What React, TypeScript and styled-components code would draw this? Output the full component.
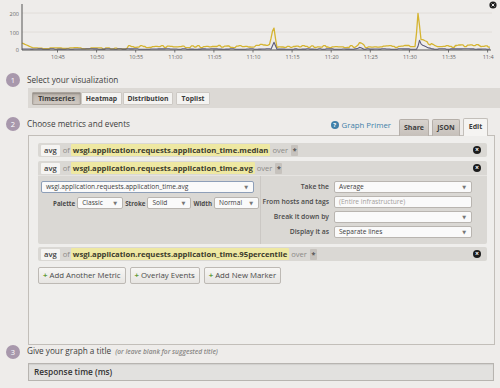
import React from 'react';
import styled, { createGlobalStyle } from 'styled-components';

const GlobalStyle = createGlobalStyle`
  html, body {
    margin: 0;
    padding: 0;
    background: #eeecea;
  }
  * {
    box-sizing: border-box;
  }
`;

const colors = {
  page: '#eeecea',
  text: '#444',
  muted: '#8c8a87',
  badge: '#a898ac',
  bar: '#dcd9d5',
  row: '#dad8d4',
  border: '#c2beb9',
  highlight: '#eee8a2',
  link: '#3f7fa8',
  plus: '#5f9a35',
  yellow: '#d5b431',
  line: '#5d5c7c',
};

const Page = styled.div`
  width: 500px;
  height: 388px;
  overflow: hidden;
  background: ${colors.page};
  font-family: 'Open Sans', 'DejaVu Sans', sans-serif;
  color: ${colors.text};
`;

const ChartSvg = styled.svg`
  display: block;
  width: 500px;
  height: 68px;
`;

const StepHeader = styled.div<{ $height: number }>`
  display: flex;
  align-items: flex-end;
  height: ${p => p.$height}px;
  padding-bottom: 1px;
  padding-right: 12px;
`;

const Badge = styled.span<{ $lift?: number }>`
  width: 14px;
  height: 14px;
  margin-left: 6px;
  margin-bottom: ${p => p.$lift || 0}px;
  border-radius: 50%;
  background: ${colors.badge};
  color: #fff;
  font-size: 7.5px;
  line-height: 14px;
  text-align: center;
  flex-shrink: 0;
`;

const StepTitle = styled.span<{ $lift?: number }>`
  margin-left: 7px;
  margin-bottom: ${p => p.$lift || 0}px;
  font-size: 8.2px;
  line-height: 14px;
  color: #3d3d3d;
  white-space: nowrap;
`;

const Hint = styled.em`
  font-size: 6.6px;
  color: #8a8886;
  font-weight: 600;
  margin-left: 2px;
`;

const VizBar = styled.div`
  display: flex;
  height: 20px;
  margin-left: 28px;
  padding: 4px 0 0 4px;
  background: ${colors.bar};
`;

const VizButton = styled.span<{ $active?: boolean; $width: number; $space?: number }>`
  width: ${p => p.$width}px;
  height: 13px;
  margin-left: ${p => p.$space || 0}px;
  border: 1px solid ${p => (p.$active ? '#aaa39c' : '#cdc9c4')};
  border-radius: 1px;
  background: ${p => (p.$active ? 'linear-gradient(#beb6ae, #d0c9c2)' : '#f4f3f1')};
  box-shadow: ${p => (p.$active ? 'inset 0 1px 2px rgba(0,0,0,0.25)' : 'none')};
  font-size: 6.8px;
  font-weight: 700;
  line-height: 11px;
  text-align: center;
  color: #3a3a3a;
`;

const Spacer = styled.div`
  flex: 1;
`;

const PrimerLink = styled.span`
  display: flex;
  align-items: center;
  gap: 3px;
  margin-bottom: 4px;
  margin-right: 8px;
  font-size: 7.8px;
  color: ${colors.link};
`;

const HelpDot = styled.span`
  width: 8px;
  height: 8px;
  border-radius: 50%;
  background: ${colors.link};
  color: #fff;
  font-size: 6px;
  font-weight: 700;
  line-height: 8px;
  text-align: center;
`;

const Tabs = styled.div`
  display: flex;
  align-items: flex-end;
  gap: 3px;
  margin-bottom: -2px;
  position: relative;
  z-index: 1;
`;

const Tab = styled.span<{ $active?: boolean; $width: number }>`
  width: ${p => p.$width}px;
  height: ${p => (p.$active ? 18 : 17)}px;
  border: 1px solid ${p => (p.$active ? '#c3bfba' : '#b5afa9')};
  border-bottom: none;
  border-radius: 2px 2px 0 0;
  background: ${p => (p.$active ? '#f5f4f2' : 'linear-gradient(#d8d3ce, #c6c0ba)')};
  font-size: 7px;
  font-weight: 700;
  line-height: 16px;
  text-align: center;
  color: #3d3d3d;
`;

const Panel = styled.div`
  height: 210px;
  margin: 0 5px 0 28px;
  padding: 7px 7px 0 9px;
  border: 1px solid ${colors.border};
  background: #efeeec;
`;

const MetricBlock = styled.div<{ $gap: number }>`
  margin-top: ${p => p.$gap}px;
  border-radius: 2px;
  background: ${colors.row};
`;

const MetricHead = styled.div`
  display: flex;
  align-items: center;
  height: 14px;
  padding: 0 6px 0 3px;
  font-size: 7.7px;
  white-space: nowrap;
`;

const Agg = styled.span`
  height: 11px;
  padding: 0 3px;
  border-radius: 1px;
  background: #f5f4f2;
  font-size: 7.6px;
  line-height: 11px;
  font-weight: 600;
  color: #404040;
`;

const Word = styled.span<{ $before: number; $after: number }>`
  margin: 0 ${p => p.$after}px 0 ${p => p.$before}px;
  font-size: 7.6px;
  color: ${colors.muted};
`;

const MetricName = styled.span`
  height: 12px;
  padding: 0 2px;
  border-radius: 1px;
  background: ${colors.highlight};
  line-height: 12px;
  font-weight: 700;
  color: #3c3b2c;
`;

const Scope = styled.span`
  width: 7px;
  height: 11px;
  border-radius: 1px;
  background: #c6c2bd;
  font-size: 7px;
  font-weight: 700;
  line-height: 12px;
  text-align: center;
  color: #555;
`;

const CloseDot = styled.span`
  width: 8px;
  height: 8px;
  margin-left: auto;
  border-radius: 50%;
  background: #1c1c1c;
  color: #fff;
  font-size: 7px;
  font-weight: 700;
  line-height: 7.5px;
  text-align: center;
`;

const Editor = styled.div`
  display: flex;
  height: 69px;
  border-top: 1px solid #e6e4e1;
`;

const EditorLeft = styled.div`
  width: 223px;
  padding: 5px 0 0 3px;
  border-right: 1px solid #cbc8c4;
`;

const EditorRight = styled.div`
  display: grid;
  grid-template-columns: 68px 138px;
  grid-auto-rows: 12px;
  column-gap: 5px;
  row-gap: 3px;
  align-content: start;
  padding-top: 5px;
`;

const Select = styled.div<{ $width: number; $focus?: boolean; $placeholder?: boolean }>`
  position: relative;
  width: ${p => p.$width}px;
  height: 12px;
  padding-left: 4px;
  border: 1px solid ${p => (p.$focus ? '#8e9fb8' : '#b9b5b0')};
  border-radius: 2px;
  background: #fafafa;
  font-size: 6.6px;
  line-height: 10px;
  color: ${p => (p.$placeholder ? '#a3a09c' : '#3d3d3d')};
  white-space: nowrap;
  overflow: hidden;
  flex-shrink: 0;
`;

const Caret = styled.span`
  position: absolute;
  right: 5px;
  top: 0;
  font-size: 5px;
  color: #777;
`;

const OptionRow = styled.div`
  display: flex;
  align-items: center;
  gap: 2px;
  margin-top: 4px;
  padding-left: 12px;
`;

const FieldLabel = styled.span`
  font-size: 6.2px;
  font-weight: 700;
  color: #4a4a4a;
  white-space: nowrap;
`;

const RightLabel = styled(FieldLabel)`
  text-align: right;
  line-height: 12px;
  font-weight: 600;
  font-size: 6.8px;
`;

const Actions = styled.div`
  display: flex;
  gap: 4px;
  margin-top: 6px;
`;

const ActionButton = styled.span`
  height: 17px;
  padding: 0 4px;
  border: 1px solid #bdb9b4;
  border-radius: 2px;
  background: linear-gradient(#f7f6f4, #e7e5e2);
  font-size: 7.8px;
  line-height: 15px;
  color: #4a4a4a;
  white-space: nowrap;
`;

const Plus = styled.span`
  margin-right: 2px;
  color: ${colors.plus};
  font-weight: 700;
`;

const TitleInput = styled.div`
  height: 18px;
  margin: 2px 6px 0 28px;
  padding-left: 5px;
  border: 1px solid #b7b4b0;
  background: #e2e1df;
  box-shadow: inset 0 1px 1px rgba(0, 0, 0, 0.08);
  font-size: 8.3px;
  font-weight: 600;
  line-height: 16px;
  color: #333;
`;

const TICKS = ['10:45', '10:50', '10:55', '11:00', '11:05', '11:10', '11:15', '11:20', '11:25', '11:30', '11:35', '11:4'];

const noise = (i: number, seed: number) => {
  const v = Math.sin(i * 12.9898 + seed * 78.233) * 43758.5453;
  return v - Math.floor(v) - 0.5;
};

const peak = (x: number, cx: number, w: number, h: number) => Math.max(0, 1 - Math.abs(x - cx) / w) * h;

const buildSeries = () => {
  const yellow: string[] = [];
  const gray: string[] = [];
  for (let x = 22; x <= 490; x += 1.5) {
    let y = 46.6 + noise(Math.round(x / 3), 1) * 2.2;
    let g = 49 + noise(Math.round(x / 4), 2) * 0.7;
    if (x < 34) y = 43 + (x - 22) * 0.45;
    else if (x < 128) y = 48.4 + noise(Math.round(x / 4), 3) * 1.4;
    if (x > 255 && x < 272) y -= 1.5;
    y -= peak(x, 273.5, 3.5, 21);
    g -= peak(x, 274, 3, 7);
    y -= peak(x, 360, 5, 4);
    g -= peak(x, 360, 4, 2);
    y -= peak(x, 418, 2.5, 33);
    if (x > 419 && x < 436) y -= (436 - x) * 0.45;
    g -= peak(x, 419, 2.5, 5);
    if (x > 419 && x < 432) g -= (432 - x) * 0.4;
    if (x > 455 && x < 480) y -= 1;
    yellow.push(`${x},${Math.min(y, 49.5).toFixed(1)}`);
    gray.push(`${x},${Math.min(g, 49.6).toFixed(1)}`);
  }
  return { yellow: yellow.join(' '), gray: gray.join(' ') };
};

const series = buildSeries();

const Chart = () => (
  <ChartSvg viewBox="0 0 500 68">
    <line x1="22" y1="13" x2="492" y2="13" stroke="#dddad6" strokeWidth="0.8" />
    <line x1="22" y1="32" x2="492" y2="32" stroke="#dddad6" strokeWidth="0.8" />
    <g fontFamily="'Open Sans', sans-serif" fontSize="5.5" fill="#666" textAnchor="end">
      <text x="19" y="15.5">200</text>
      <text x="19" y="34.5">100</text>
      <text x="19" y="52">0</text>
    </g>
    <polyline points={series.yellow} fill="none" stroke={colors.yellow} strokeWidth="1.3" strokeLinejoin="round" />
    <polyline points={series.gray} fill="none" stroke={colors.line} strokeWidth="1.1" strokeLinejoin="round" />
    <line x1="22" y1="4" x2="22" y2="50" stroke="#555" strokeWidth="1" />
    <line x1="22" y1="50" x2="491" y2="50" stroke="#555" strokeWidth="1" />
    <g fontFamily="'Open Sans', sans-serif" fontSize="5.5" fill="#666" textAnchor="middle">
      {TICKS.map((t, i) => {
        const x = 57.5 + i * 39.1;
        return (
          <g key={t}>
            <line x1={x} y1="50" x2={x} y2="52.5" stroke="#555" strokeWidth="0.8" />
            <text x={x + 0.5} y="59">{t}</text>
          </g>
        );
      })}
    </g>
    <circle cx="493" cy="5" r="3.6" fill="#1f1f1f" />
    <path d="M491.6 3.6 L494.4 6.4 M494.4 3.6 L491.6 6.4" stroke="#fff" strokeWidth="0.9" />
  </ChartSvg>
);

const MetricLine = ({ name }: { name: string }) => (
  <MetricHead>
    <Agg>avg</Agg>
    <Word $before={3} $after={1}>of</Word>
    <MetricName>{name}</MetricName>
    <Word $before={2} $after={3}>over</Word>
    <Scope>*</Scope>
    <CloseDot>×</CloseDot>
  </MetricHead>
);

const Dropdown = ({ width, value, focus, placeholder, caret = true }: { width: number; value: string; focus?: boolean; placeholder?: boolean; caret?: boolean }) => (
  <Select $width={width} $focus={focus} $placeholder={placeholder}>
    {value}
    {caret && <Caret>▼</Caret>}
  </Select>
);

const App = () => (
  <Page>
    <GlobalStyle />
    <Chart />

    <StepHeader $height={20}>
      <Badge>1</Badge>
      <StepTitle>Select your visualization</StepTitle>
    </StepHeader>
    <VizBar>
      <VizButton $active $width={49}>Timeseries</VizButton>
      <VizButton $width={41}>Heatmap</VizButton>
      <VizButton $width={50} $space={1}>Distribution</VizButton>
      <VizButton $width={34} $space={3}>Toplist</VizButton>
    </VizBar>

    <StepHeader $height={27}>
      <Badge $lift={3}>2</Badge>
      <StepTitle $lift={3}>Choose metrics and events</StepTitle>
      <Spacer />
      <PrimerLink>
        <HelpDot>?</HelpDot>
        Graph Primer
      </PrimerLink>
      <Tabs>
        <Tab $width={30}>Share</Tab>
        <Tab $width={28}>JSON</Tab>
        <Tab $width={25} $active>Edit</Tab>
      </Tabs>
    </StepHeader>

    <Panel>
      <MetricBlock $gap={0}>
        <MetricLine name="wsgi.application.requests.application_time.median" />
      </MetricBlock>
      <MetricBlock $gap={4}>
        <MetricLine name="wsgi.application.requests.application_time.avg" />
        <Editor>
          <EditorLeft>
            <Dropdown width={213} value="wsgi.application.requests.application_time.avg" focus />
            <OptionRow>
              <FieldLabel>Palette</FieldLabel>
              <Dropdown width={46} value="Classic" />
              <FieldLabel>Stroke</FieldLabel>
              <Dropdown width={44} value="Solid" />
              <FieldLabel>Width</FieldLabel>
              <Dropdown width={45} value="Normal" />
            </OptionRow>
          </EditorLeft>
          <EditorRight>
            <RightLabel>Take the</RightLabel>
            <Dropdown width={138} value="Average" />
            <RightLabel>From hosts and tags</RightLabel>
            <Dropdown width={138} value="(Entire infrastructure)" placeholder caret={false} />
            <RightLabel>Break it down by</RightLabel>
            <Dropdown width={138} value="" />
            <RightLabel>Display it as</RightLabel>
            <Dropdown width={138} value="Separate lines" />
          </EditorRight>
        </Editor>
      </MetricBlock>
      <MetricBlock $gap={3}>
        <MetricLine name="wsgi.application.requests.application_time.95percentile" />
      </MetricBlock>
      <Actions>
        <ActionButton><Plus>+</Plus>Add Another Metric</ActionButton>
        <ActionButton><Plus>+</Plus>Overlay Events</ActionButton>
        <ActionButton><Plus>+</Plus>Add New Marker</ActionButton>
      </Actions>
    </Panel>

    <StepHeader $height={16}>
      <Badge $lift={1}>3</Badge>
      <StepTitle $lift={1}>
        Give your graph a title <Hint>(or leave blank for suggested title)</Hint>
      </StepTitle>
    </StepHeader>
    <TitleInput>Response time (ms)</TitleInput>
  </Page>
);

export default App;
